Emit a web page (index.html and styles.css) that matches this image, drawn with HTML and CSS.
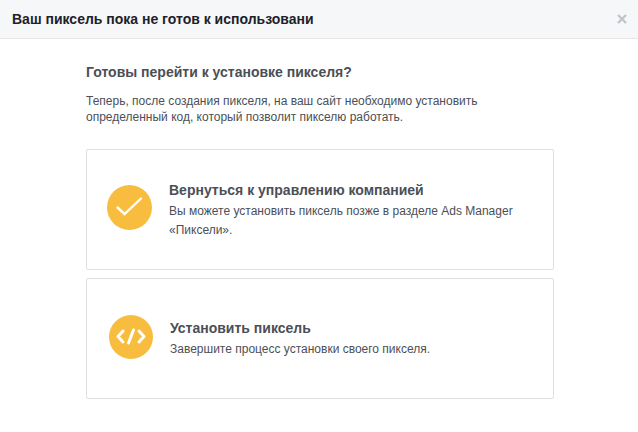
FILE: index.html
```html
<!DOCTYPE html>
<html lang="ru">
<head>
<meta charset="utf-8">
<title>Пиксель</title>
<link rel="stylesheet" href="styles.css">
</head>
<body>
<header class="header">
  <h1 class="header-title">Ваш пиксель пока не готов к использовани</h1>
  <svg class="close" width="10" height="10" viewBox="0 0 10 10" aria-label="Закрыть"><path d="M1 1L9 9M9 1L1 9" stroke="#bec2c9" stroke-width="2.2" fill="none"/></svg>
</header>
<main class="content">
  <h2 class="question">Готовы перейти к установке пикселя?</h2>
  <p class="intro">Теперь, после создания пикселя, на ваш сайт необходимо установить определенный код, который позволит пикселю работать.</p>
  <section class="card card-first">
    <svg class="icon icon-large" width="45" height="45" viewBox="0 0 45 45"><circle cx="22.5" cy="22.5" r="22.5" fill="#f8bd3e"/><path d="M10.5 22.5L17.5 29L34 13.5" stroke="#fff" stroke-width="2.4" fill="none" stroke-linecap="round" stroke-linejoin="miter"/></svg>
    <div class="card-text">
      <h3 class="card-title">Вернуться к управлению компанией</h3>
      <p class="card-desc">Вы можете установить пиксель позже в разделе Ads Manager<br>«Пиксели».</p>
    </div>
  </section>
  <section class="card card-second">
    <svg class="icon icon-small" width="44" height="44" viewBox="0 0 44 44"><circle cx="22" cy="22" r="22" fill="#f8bd3e"/><path d="M14 16L9 21.5L14 27M30 16L35 21.5L30 27M24.5 15L19.5 28" stroke="#fff" stroke-width="3" fill="none" stroke-linecap="round" stroke-linejoin="round"/></svg>
    <div class="card-text">
      <h3 class="card-title">Установить пиксель</h3>
      <p class="card-desc">Завершите процесс установки своего пикселя.</p>
    </div>
  </section>
</main>
</body>
</html>
```
FILE: styles.css
```css
* {
  box-sizing: border-box;
}

html, body {
  margin: 0;
  padding: 0;
  background: #fff;
  font-family: "Liberation Sans", Arial, sans-serif;
  overflow: hidden;
}

.header {
  display: flex;
  align-items: center;
  justify-content: space-between;
  height: 39px;
  padding: 0 11px 0 12px;
  background: #f6f7f9;
  border-bottom: 1px solid #e5e5e5;
}

.header-title {
  margin: 0;
  font-size: 14px;
  line-height: 18px;
  font-weight: 700;
  color: #1d2129;
}

.content {
  width: 468px;
  margin-left: 86px;
  padding-top: 24px;
}

.question {
  margin: 0 0 12px;
  font-size: 14px;
  line-height: 18px;
  font-weight: 700;
  color: #4b4f56;
}

.intro {
  margin: 0 0 24px;
  font-size: 12px;
  line-height: 16px;
  color: #4b4f56;
}

.card {
  display: flex;
  align-items: center;
  height: 121px;
  margin-bottom: 8px;
  background: #fff;
  border: 1px solid #dddfe2;
  border-radius: 2px;
}

.card-first {
  padding-left: 20px;
}

.card-second {
  padding-left: 22px;
}

.icon {
  flex: none;
}

.icon-large {
  margin-right: 17px;
  margin-bottom: 4px;
}

.icon-small {
  margin-right: 17px;
  margin-bottom: 3px;
}

.card-text {
  padding-top: 1px;
}

.card-title {
  margin: 0 0 3px;
  font-size: 14px;
  line-height: 18px;
  font-weight: 700;
  color: #4b4f56;
}

.card-desc {
  margin: 0;
  font-size: 12px;
  line-height: 19px;
  color: #4b4f56;
}
```
